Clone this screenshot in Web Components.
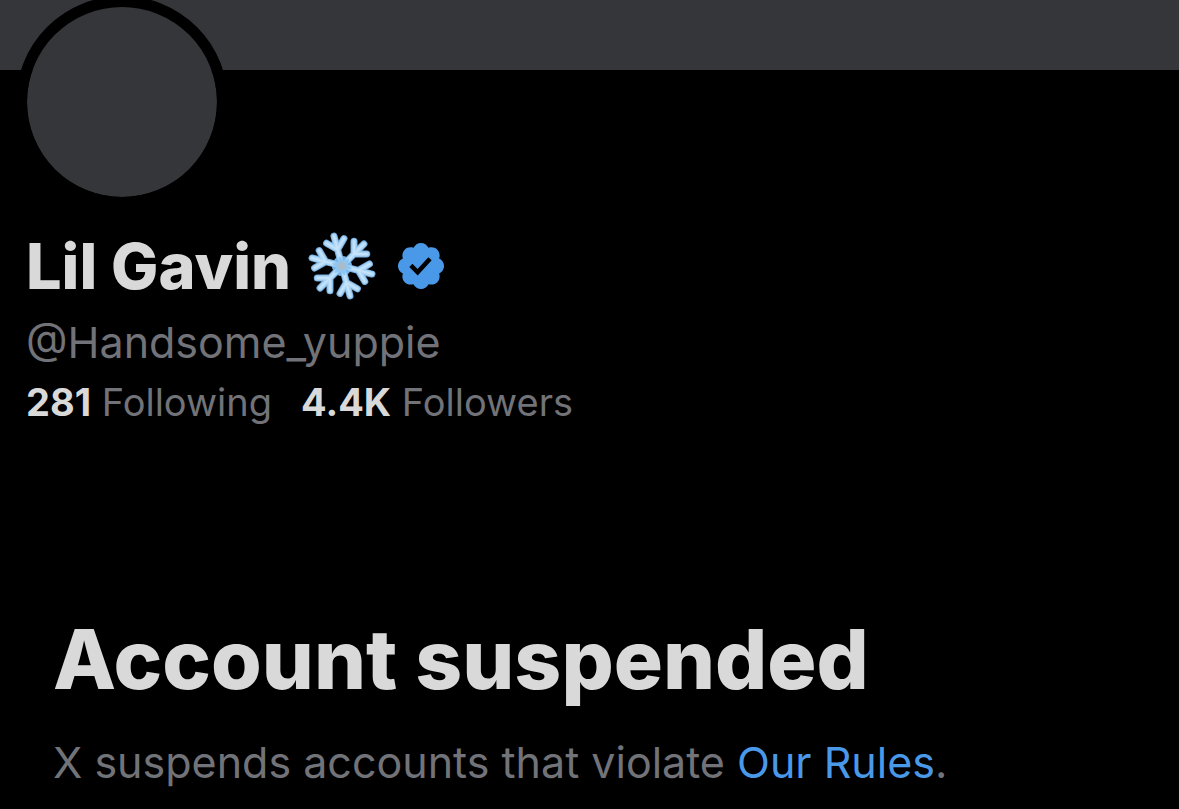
<!DOCTYPE html>
<html lang="en">
<head>
<meta charset="utf-8">
<meta name="viewport" content="width=device-width, initial-scale=1">
<title>Lil Gavin (@Handsome_yuppie)</title>
<style>
  html { background: #000; }
  body {
    margin: 0;
    background: #000;
    color: #d9d9d9;
    font-family: Inter, "Liberation Sans", sans-serif;
    --panel: #353639;
    --muted: #717378;
    --accent: #4a99e9;
  }
</style>
</head>
<body>
<profile-page></profile-page>

<script>
const define = (name, markup) => {
  const template = document.createElement('template');
  template.innerHTML = markup;
  customElements.define(name, class extends HTMLElement {
    constructor() {
      super();
      this.attachShadow({ mode: 'open' }).append(template.content.cloneNode(true));
    }
  });
};

define('profile-banner', `
  <style>
    :host { display: block; height: 70px; background: var(--panel); }
  </style>`);

define('profile-avatar', `
  <style>
    :host {
      display: block;
      box-sizing: border-box;
      width: 212px;
      height: 212px;
      border: 11px solid #000;
      border-radius: 50%;
      background: var(--panel);
      background-clip: padding-box;
    }
  </style>`);

define('verified-badge', `
  <style>
    :host { display: block; width: 54px; height: 54px; }
    svg { display: block; width: 100%; height: 100%; fill: var(--accent); }
  </style>
  <svg viewBox="0 0 24 24" role="img" aria-label="Verified account">
    <path d="M22.25 12c0-1.43-.88-2.67-2.19-3.34.46-1.39.2-2.9-.81-3.91s-2.52-1.27-3.91-.81c-.66-1.31-1.91-2.19-3.34-2.19s-2.67.88-3.33 2.19c-1.4-.46-2.91-.2-3.92.81s-1.26 2.52-.8 3.91c-1.31.67-2.2 1.91-2.2 3.34s.89 2.67 2.2 3.34c-.46 1.39-.21 2.9.8 3.91s2.52 1.26 3.91.81c.67 1.31 1.91 2.19 3.34 2.19s2.68-.88 3.34-2.19c1.39.45 2.9.2 3.91-.81s1.27-2.52.81-3.91c1.31-.67 2.19-1.91 2.19-3.34zm-11.71 4.2L6.8 12.46l1.41-1.42 2.26 2.26 4.8-5.23 1.47 1.36-6.2 6.77z"/>
  </svg>`);

define('snowflake-icon', `
  <style>
    :host { display: block; width: 72px; height: 72px; }
    svg { display: block; width: 100%; height: 100%; }
    .edge { stroke: #78aedd; stroke-width: 7; }
    .ice { stroke: #add6f6; stroke-width: 5; }
    .glint { stroke: #c4e2f8; stroke-width: 2; }
    g { fill: none; stroke-linecap: round; stroke-linejoin: round; }
  </style>
  <svg viewBox="-36 -36 72 72" role="img" aria-label="Snowflake">
    <defs>
      <path id="arm" d="M0 -4V-31M0 -17L-9 -26M0 -17L9 -26"/>
      <g id="flake">
        <use href="#arm"/>
        <use href="#arm" transform="rotate(60)"/>
        <use href="#arm" transform="rotate(120)"/>
        <use href="#arm" transform="rotate(180)"/>
        <use href="#arm" transform="rotate(240)"/>
        <use href="#arm" transform="rotate(300)"/>
      </g>
    </defs>
    <g transform="rotate(-15)">
      <use href="#flake" class="edge"/>
      <circle r="10" fill="#78b6ea"/>
      <use href="#flake" class="ice"/>
      <use href="#flake" class="glint"/>
      <path d="M0 -10L3 -5L9 -5L6 0L9 5L3 5L0 10L-3 5L-9 5L-6 0L-9 -5L-3 -5Z" fill="#8fc6f1"/>
      <circle r="4" fill="#a9bccb"/>
    </g>
  </svg>`);

define('profile-name', `
  <style>
    :host { display: flex; align-items: center; height: 72px; }
    h1 { margin: 0 15px 0 0; font-size: 63px; line-height: 72px; font-weight: 800; white-space: nowrap; }
    verified-badge { margin-left: 16px; }
  </style>
  <h1><slot></slot></h1>
  <snowflake-icon></snowflake-icon>
  <verified-badge></verified-badge>`);

define('profile-stat', `
  <style>
    :host { display: block; }
    a { color: var(--muted); font-size: 38px; line-height: 48px; text-decoration: none; white-space: nowrap; }
    ::slotted(b) { color: #d9d9d9; font-weight: 700; }
  </style>
  <a href="#"><slot></slot></a>`);

define('suspension-notice', `
  <style>
    :host { display: block; padding: 0 53px; }
    h2 { margin: 0; font-size: 82px; line-height: 104px; font-weight: 800; }
    p { margin: 22px 0 0; color: var(--muted); font-size: 43px; line-height: 56px; }
    ::slotted(a) { color: var(--accent); text-decoration: none; }
  </style>
  <h2><slot name="title"></slot></h2>
  <p><slot></slot></p>`);

define('profile-page', `
  <style>
    :host { display: block; padding-bottom: 16px; }
    profile-avatar { margin: -74px 0 0 16px; }
    .details { padding: 22px 26px 0; }
    .handle { margin: 12px 0 0; color: var(--muted); font-size: 43px; line-height: 56px; }
    nav { display: flex; gap: 29px; margin-top: 8px; }
    suspension-notice { margin-top: 182px; }
    a { color: var(--accent); }
    b { font-weight: 700; }
  </style>
  <header>
    <profile-banner></profile-banner>
    <profile-avatar></profile-avatar>
  </header>
  <main>
    <section class="details">
      <profile-name>Lil Gavin</profile-name>
      <p class="handle">@Handsome_yuppie</p>
      <nav aria-label="Connections">
        <profile-stat><b>281</b> Following</profile-stat>
        <profile-stat><b>4.4K</b> Followers</profile-stat>
      </nav>
    </section>
    <suspension-notice>
      <span slot="title">Account suspended</span>X suspends accounts that violate <a href="#rules">Our Rules</a>.
    </suspension-notice>
  </main>`);
</script>
</body>
</html>
